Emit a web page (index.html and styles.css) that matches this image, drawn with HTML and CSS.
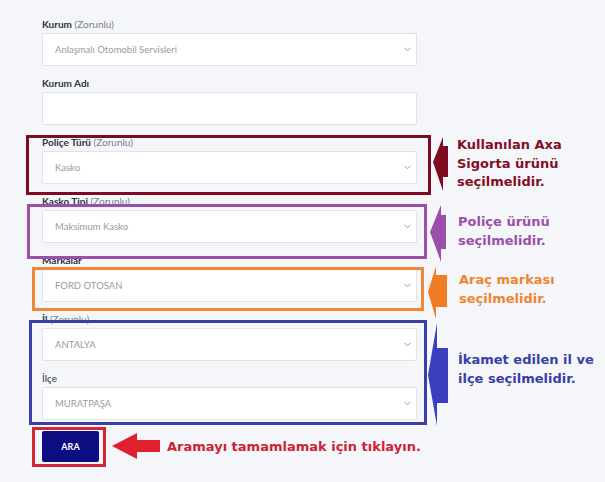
FILE: index.html
```html
<!DOCTYPE html>
<html lang="tr">
<head>
<meta charset="utf-8">
<title>Arama</title>
<link rel="stylesheet" href="styles.css">
</head>
<body>
<div class="page">
  <form class="form">
    <div class="field">
      <div class="label"><b>Kurum</b> <span class="req">(Zorunlu)</span></div>
      <div class="select"><span>Anlaşmalı Otomobil Servisleri</span><svg class="chev" width="7" height="5" viewBox="0 0 7 5"><polyline points="0.5,0.8 3.5,3.8 6.5,0.8" fill="none" stroke="#9a9a9a" stroke-width="1"/></svg></div>
    </div>
    <div class="field">
      <div class="label"><b>Kurum Adı</b></div>
      <div class="select"></div>
    </div>
    <div class="field">
      <div class="label"><b>Poliçe Türü</b> <span class="req">(Zorunlu)</span></div>
      <div class="select"><span>Kasko</span><svg class="chev" width="7" height="5" viewBox="0 0 7 5"><polyline points="0.5,0.8 3.5,3.8 6.5,0.8" fill="none" stroke="#9a9a9a" stroke-width="1"/></svg></div>
    </div>
    <div class="field">
      <div class="label"><b>Kasko Tipi</b> <span class="req">(Zorunlu)</span></div>
      <div class="select"><span>Maksimum Kasko</span><svg class="chev" width="7" height="5" viewBox="0 0 7 5"><polyline points="0.5,0.8 3.5,3.8 6.5,0.8" fill="none" stroke="#9a9a9a" stroke-width="1"/></svg></div>
    </div>
    <div class="field">
      <div class="label"><b>Markalar</b></div>
      <div class="select"><span>FORD OTOSAN</span><svg class="chev" width="7" height="5" viewBox="0 0 7 5"><polyline points="0.5,0.8 3.5,3.8 6.5,0.8" fill="none" stroke="#9a9a9a" stroke-width="1"/></svg></div>
    </div>
    <div class="field">
      <div class="label"><b>İl</b> <span class="req">(Zorunlu)</span></div>
      <div class="select"><span>ANTALYA</span><svg class="chev" width="7" height="5" viewBox="0 0 7 5"><polyline points="0.5,0.8 3.5,3.8 6.5,0.8" fill="none" stroke="#9a9a9a" stroke-width="1"/></svg></div>
    </div>
    <div class="field">
      <div class="label"><span class="plain">İlçe</span></div>
      <div class="select"><span>MURATPAŞA</span><svg class="chev" width="7" height="5" viewBox="0 0 7 5"><polyline points="0.5,0.8 3.5,3.8 6.5,0.8" fill="none" stroke="#9a9a9a" stroke-width="1"/></svg></div>
    </div>
    <button type="button" class="btn">ARA</button>
  </form>

  <svg class="marks" width="605" height="482" viewBox="0 0 605 482">
    <rect x="27.5" y="136.5" width="402" height="57" fill="none" stroke="#7d0c22" stroke-width="3"/>
    <rect x="28.5" y="205.5" width="397" height="52" fill="none" stroke="#9b4fa8" stroke-width="3"/>
    <rect x="33.5" y="268.5" width="389" height="41" fill="none" stroke="#ee8838" stroke-width="3"/>
    <rect x="30.5" y="321.5" width="395" height="102" fill="none" stroke="#3a3fa6" stroke-width="3"/>
    <rect x="33.5" y="428.5" width="71" height="37" fill="none" stroke="#d42535" stroke-width="3"/>

    <polygon points="433,162 443,137 443,146 448,146 448,177 443,177 443,191" fill="#7d0c22"/>
    <polygon points="430,232 441,205 441,215 446,215 446,249 441,249 441,262" fill="#9b4fa8"/>
    <polygon points="428,292 436,266 436,275 447,275 447,307 436,307 436,319" fill="#f07d25"/>
    <polygon points="428,375 437,323 437,348 448,348 448,403 437,403 437,426" fill="#3a3fc0"/>
    <polygon points="112,446 137,433 137,440 160,440 160,452 137,452 137,459" fill="#e0202e"/>
  </svg>

  <div class="note n-red">Kullanılan Axa<br>Sigorta ürünü<br>seçilmelidir.</div>
  <div class="note n-purple">Poliçe ürünü<br>seçilmelidir.</div>
  <div class="note n-orange">Araç markası<br>seçilmelidir.</div>
  <div class="note n-blue">İkamet edilen il ve<br>ilçe seçilmelidir.</div>
  <div class="note n-cta">Aramayı tamamlamak için tıklayın.</div>
</div>
</body>
</html>
```

FILE: styles.css
```css
html, body {
  margin: 0;
  padding: 0;
  background: #f4f6fa;
}
.page {
  position: relative;
  width: 605px;
  height: 482px;
  overflow: hidden;
  background: #f4f6fa;
}
.form {
  display: flex;
  flex-direction: column;
  width: 375px;
  padding: 16px 0 0 42px;
  margin: 0;
  font-family: Lato, "Open Sans", sans-serif;
}
.field {
  display: flex;
  flex-direction: column;
  margin-bottom: 9px;
}
.label {
  height: 16px;
  line-height: 16px;
  margin-bottom: 1px;
  font-size: 10px;
  color: #2f3540;
}
.label b { font-weight: 700; }
.label .req { color: #7a808a; font-weight: 400; }
.label .plain { color: #2f3540; font-weight: 400; }
.select {
  box-sizing: border-box;
  height: 33px;
  background: #fff;
  border: 1px solid #dfe3ea;
  border-radius: 2px;
  display: flex;
  align-items: center;
  justify-content: space-between;
  padding: 0 5px 0 12px;
  font-size: 9.5px;
  color: #9a9a9a;
}
.chev { display: block; }
.btn {
  margin-top: 2px;
  width: 57px;
  height: 31px;
  border: 0;
  border-radius: 2px;
  background: #0d0d82;
  color: #fff;
  font-family: Lato, "Open Sans", sans-serif;
  font-weight: 700;
  font-size: 9px;
  padding: 0;
}
.marks {
  position: absolute;
  left: 0;
  top: 0;
  pointer-events: none;
}
.note {
  position: absolute;
  font-family: "DejaVu Sans", Verdana, sans-serif;
  font-weight: 700;
  font-size: 13px;
  line-height: 18.5px;
  white-space: nowrap;
}
.n-red { left: 457px; top: 136px; color: #840f25; }
.n-purple { left: 458px; top: 213px; color: #9b4fa8; }
.n-orange { left: 459px; top: 271px; color: #ef8530; }
.n-blue { left: 458px; top: 351px; color: #3a3fa6; }
.n-cta { left: 167px; top: 438px; color: #cf1f33; }
```
